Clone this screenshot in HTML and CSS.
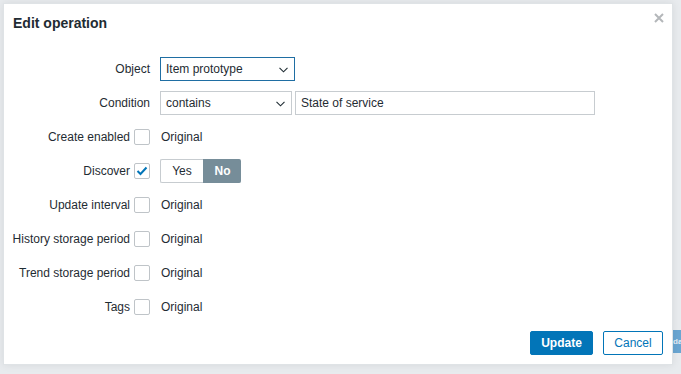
FILE: index.html
```html
<!DOCTYPE html>
<html>
<head>
<meta charset="utf-8">
<link rel="stylesheet" href="styles.css">
</head>
<body>
<div class="page">
  <div class="bg-button"><span class="bg-text">da</span></div>
  <div class="modal">
    <div class="modal-head">
      <h4 class="modal-title">Edit operation</h4>
      <button class="close" aria-label="Close">
        <svg width="10" height="10" viewBox="0 0 10 10"><path d="M1 1L9 9M9 1L1 9" stroke="#b4b7ba" stroke-width="2"/></svg>
      </button>
    </div>
    <div class="form">
      <div class="label">Object</div>
      <div class="field">
        <div class="select select-focus w135">Item prototype<svg class="chev" width="9" height="6" viewBox="0 0 9 6"><path d="M0.5 0.8L4.5 4.8L8.5 0.8" fill="none" stroke="#1f2c33" stroke-width="1.1"/></svg></div>
      </div>

      <div class="label">Condition</div>
      <div class="field">
        <div class="select w132">contains<svg class="chev" width="9" height="6" viewBox="0 0 9 6"><path d="M0.5 0.8L4.5 4.8L8.5 0.8" fill="none" stroke="#1f2c33" stroke-width="1.1"/></svg></div>
        <div class="input">State of service</div>
      </div>

      <div class="label">Create enabled<span class="cb"></span></div>
      <div class="field"><span class="orig">Original</span></div>

      <div class="label">Discover<span class="cb"><svg width="12" height="10" viewBox="0 0 12 10"><path d="M1.5 5L4.5 8L10.5 1.5" fill="none" stroke="#0275b8" stroke-width="2"/></svg></span></div>
      <div class="field">
        <div class="toggle"><span class="seg">Yes</span><span class="seg on">No</span></div>
      </div>

      <div class="label">Update interval<span class="cb"></span></div>
      <div class="field"><span class="orig">Original</span></div>

      <div class="label">History storage period<span class="cb"></span></div>
      <div class="field"><span class="orig">Original</span></div>

      <div class="label">Trend storage period<span class="cb"></span></div>
      <div class="field"><span class="orig">Original</span></div>

      <div class="label">Tags<span class="cb"></span></div>
      <div class="field"><span class="orig">Original</span></div>
    </div>
    <div class="modal-foot">
      <button class="btn btn-primary">Update</button>
      <button class="btn btn-alt">Cancel</button>
    </div>
  </div>
</div>
</body>
</html>
```

FILE: styles.css
```css
* { box-sizing: border-box; }
html, body { margin: 0; padding: 0; }
body {
  background: #e8ebee;
  font-family: "Liberation Sans", Arial, sans-serif;
  font-size: 12px;
  color: #1f2c33;
  width: 681px;
  height: 374px;
  overflow: hidden;
}
.page {
  position: relative;
  width: 681px;
  height: 374px;
  padding: 3px 0 0 3px;
}
.bg-button {
  position: absolute;
  left: 673px;
  top: 330px;
  width: 8px;
  height: 23px;
  background: #6aa6d2;
  overflow: hidden;
}
.bg-text {
  display: block;
  color: #e6eef5;
  font-weight: bold;
  font-size: 8px;
  line-height: 23px;
}
.modal {
  position: relative;
  width: 670px;
  height: 362px;
  background: #fff;
  border: 1px solid #dfe3e6;
  box-shadow: 0 0 8px rgba(0,0,0,0.08);
  display: flex;
  flex-direction: column;
}
.modal-head {
  display: flex;
  justify-content: space-between;
  align-items: flex-start;
  height: 53px;
  padding: 11px 6px 0 9px;
}
.modal-title {
  margin: 0;
  font-size: 14px;
  font-weight: bold;
  color: #1f2c33;
  line-height: 17px;
}
.close {
  border: 0;
  background: none;
  padding: 0;
  margin-top: -4px;
  width: 14px;
  height: 14px;
  display: flex;
  align-items: center;
  justify-content: center;
}
.form {
  display: grid;
  grid-template-columns: 146px 1fr;
  grid-auto-rows: 24px;
  column-gap: 10px;
  row-gap: 10px;
  flex: 1;
  align-content: start;
}
.label {
  display: flex;
  align-items: center;
  justify-content: flex-end;
  white-space: nowrap;
  line-height: 14px;
}
.cb {
  width: 16px;
  height: 16px;
  border: 1px solid #bfc4c8;
  border-radius: 2px;
  margin-left: 4px;
  display: flex;
  align-items: center;
  justify-content: center;
  background: #fff;
}
.field {
  display: flex;
  align-items: center;
  gap: 3px;
}
.select {
  position: relative;
  height: 24px;
  border: 1px solid #c7ccd0;
  display: flex;
  align-items: center;
  padding-left: 5px;
  background: #fff;
}
.select-focus { border-color: #1f6ea3; }
.w135 { width: 135px; }
.w132 { width: 132px; }
.chev {
  position: absolute;
  right: 6px;
  top: 9px;
}
.input {
  width: 300px;
  height: 24px;
  border: 1px solid #c7ccd0;
  display: flex;
  align-items: center;
  padding-left: 5px;
}
.orig { padding-left: 1px; }
.toggle {
  display: flex;
  height: 24px;
}
.seg {
  display: flex;
  align-items: center;
  justify-content: center;
  width: 43px;
  border: 1px solid #c7ccd0;
  border-right: 0;
  border-radius: 2px 0 0 2px;
  color: #1f2c33;
}
.seg.on {
  width: 38px;
  background: #768d99;
  border-color: #768d99;
  color: #fff;
  font-weight: bold;
  border-radius: 0 2px 2px 0;
}
.modal-foot {
  display: flex;
  justify-content: flex-end;
  gap: 10px;
  padding: 0 9px 9px 0;
}
.btn {
  height: 24px;
  font-family: "Liberation Sans", Arial, sans-serif;
  font-size: 12px;
  border-radius: 2px;
  padding: 0;
  cursor: pointer;
}
.btn-primary {
  width: 63px;
  background: #0275b8;
  border: 1px solid #0275b8;
  color: #fff;
  font-weight: bold;
}
.btn-alt {
  width: 60px;
  background: #fff;
  border: 1px solid #0275b8;
  color: #0275b8;
}
```
